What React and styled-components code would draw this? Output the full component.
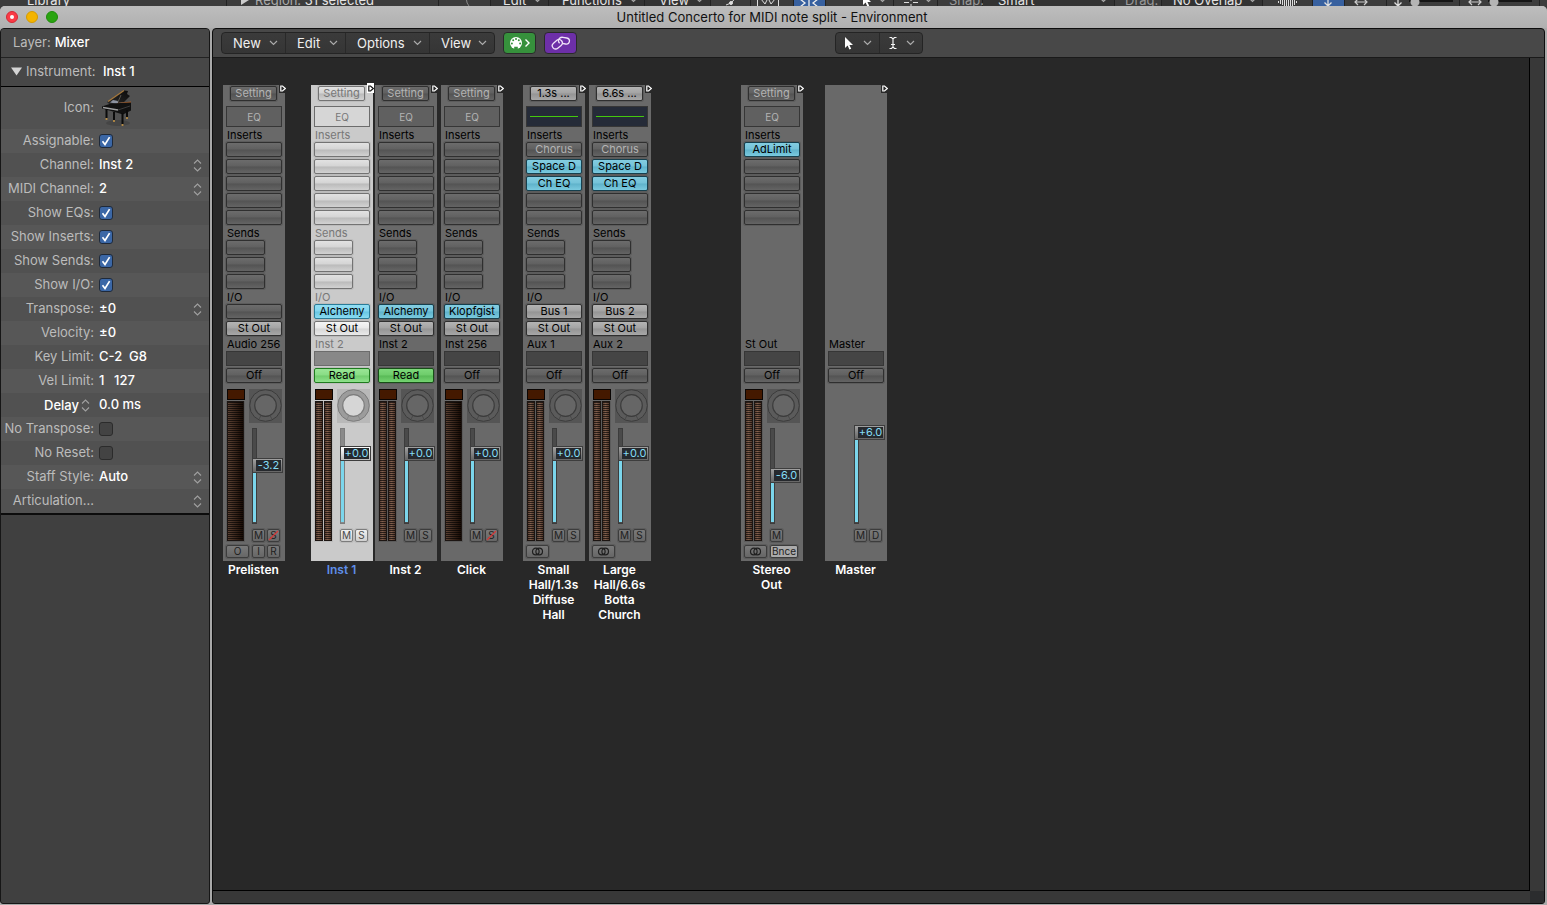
import React from "react";
import styled, { createGlobalStyle, css } from "styled-components";

const Global = createGlobalStyle`
  * { box-sizing: border-box; }
  html, body, #root { height: 100%; }
  body {
    margin: 0;
    overflow: hidden;
    background: #3a3a3a;
    color: #fff;
    font-family: Inter, "Liberation Sans", sans-serif;
    font-size: 13px;
  }
  button, input, select { font: inherit; color: inherit; margin: 0; padding: 0; }
`;

const Desktop = styled.div`
  display: flex;
  flex-direction: column;
  height: 100vh;
`;

/* ---------- toolbar of the window behind ---------- */

const BackStrip = styled.div`
  height: 6px;
  flex: none;
  overflow: hidden;
  background: #3c3c3c;
`;
const BackRow = styled.div`
  display: flex;
  height: 16px;
  margin-top: -8px;
  line-height: 16px;
  white-space: nowrap;
  color: #e4e4e4;
`;
const BackCell = styled.div`
  display: flex;
  align-items: center;
  flex: 0 1 ${(p) => p.$w}px;
  min-width: 0;
  gap: 6px;
  padding-left: ${(p) => p.$pad || 0}px;
  background: ${(p) => (p.$on ? "#37609f" : p.$dark ? "#333" : "transparent")};
  border-right: 1px solid #222;
  color: ${(p) => (p.$dim ? "#999" : "inherit")};
  justify-content: ${(p) => (p.$split ? "space-between" : "flex-start")};
  padding-right: ${(p) => (p.$split ? 6 : 0)}px;
  svg { flex: none; }
`;
const BackMuted = styled.span`
  color: #aaa;
`;

/* ---------- window ---------- */

const Window = styled.div`
  flex: 1;
  min-height: 0;
  display: flex;
  flex-direction: column;
  background: #a9a9a9;
  border-radius: 5px 5px 0 0;
`;
const TitleBar = styled.header`
  display: grid;
  grid-template-columns: 1fr auto 1fr;
  align-items: center;
  height: 22px;
  flex: none;
  padding: 0 9px 0 6px;
  background: linear-gradient(#bdbdbd, #b0b0b0);
  border-radius: 5px 5px 0 0;
`;
const Lights = styled.div`
  display: flex;
  gap: 8px;
`;
const Light = styled.button`
  display: grid;
  place-items: center;
  width: 12px;
  height: 12px;
  border: 1px solid ${(p) => p.$edge};
  border-radius: 50%;
  background: ${(p) => p.$color};
  &::after {
    content: "";
    width: 4px;
    height: 4px;
    border-radius: 50%;
    background: ${(p) => (p.$dot ? "#fff" : "transparent")};
  }
`;
const Title = styled.h1`
  margin: 0;
  font-size: 13px;
  line-height: 16px;
  font-weight: 400;
  color: #111;
`;
const Body = styled.div`
  flex: 1;
  min-height: 0;
  display: flex;
  gap: 2px;
  padding: 0 2px 1px 0;
`;

/* ---------- inspector ---------- */

const Sidebar = styled.aside`
  width: 210px;
  flex: none;
  background: #404040;
  border: 1px solid #161616;
  border-radius: 4px 4px 3px 3px;
  overflow: hidden;
`;
const SideHead = styled.div`
  display: flex;
  align-items: center;
  gap: ${(p) => p.$gap}px;
  height: 29px;
  padding: 0 0 2px ${(p) => p.$pad}px;
  background: #474747;
  border-bottom: 1px solid ${(p) => (p.$strong ? "#000" : "#222")};
`;
const Muted = styled.span`
  color: #bcbcbc;
`;
const Strong = styled.span`
  font-weight: 500;
`;
const Rows = styled.div`
  border-bottom: 2px solid #0c0c0c;
`;
const Row = styled.div`
  display: grid;
  grid-template-columns: 93px 1fr;
  column-gap: 5px;
  align-items: center;
  height: ${(p) => (p.$tall ? 42 : 24)}px;
  padding-right: 7px;
  background: #515151;
  &:nth-child(even) { background: #575757; }
`;
const RowLabel = styled.label`
  justify-self: end;
  padding-bottom: 2px;
  line-height: 16px;
  white-space: nowrap;
  color: #bcbcbc;
`;
const ValueCell = styled.div`
  display: flex;
  align-items: center;
  gap: 6px;
  min-width: 0;
`;
const Field = styled.input`
  width: ${(p) => p.$w || 90}px;
  height: 18px;
  min-width: 0;
  padding-bottom: 2px;
  border: 0;
  background: none;
  font-weight: 500;
  line-height: 16px;
  outline: none;
`;
const Select = styled.select`
  appearance: none;
  flex: 1;
  height: 18px;
  min-width: 0;
  padding-bottom: 2px;
  border: 0;
  background: none;
  font-weight: 500;
  line-height: 16px;
  outline: none;
`;
const DelayLabel = styled.label`
  display: flex;
  align-items: center;
  justify-self: end;
  gap: 2px;
  padding-right: 4px;
  font-weight: 500;
`;
const Tick = styled.span`
  display: grid;
  place-items: center;
  > * { grid-area: 1 / 1; }
  svg { pointer-events: none; }
`;
const TickInput = styled.input`
  appearance: none;
  width: 14px;
  height: 14px;
  border: 1px solid #2b2b2b;
  border-radius: 3px;
  background: #434343;
  &:checked { background: #3b67a6; border-color: #1f2a3a; }
`;

/* ---------- environment pane ---------- */

const Pane = styled.main`
  flex: 1;
  min-width: 0;
  display: flex;
  flex-direction: column;
  background: #484848;
  border: 1px solid #0d0d0d;
  border-radius: 4px 4px 3px 3px;
  overflow: hidden;
`;
const Toolbar = styled.div`
  display: grid;
  grid-template-columns: 1fr auto 1fr;
  align-items: center;
  height: 29px;
  flex: none;
  padding: 0 8px;
  border-bottom: 1px solid #1a1a1a;
`;
const ToolLeft = styled.div`
  display: flex;
  gap: 8px;
`;
const Group = styled.div`
  display: flex;
  height: 22px;
  border: 1px solid #242424;
  border-radius: 4px;
  background: linear-gradient(#3b3b3b, #353535);
  overflow: hidden;
`;
const MenuButton = styled.button`
  display: flex;
  align-items: center;
  justify-content: space-between;
  min-width: ${(p) => p.$w}px;
  padding: 0 7px 0 11px;
  border: 0;
  background: none;
  color: #f0f0f0;
  & + & { border-left: 1px solid #292929; }
`;
const ToolButton = styled(MenuButton)`
  padding: 0 7px 0 8px;
`;
const ColorButton = styled.button`
  display: flex;
  align-items: center;
  justify-content: center;
  width: 33px;
  height: 22px;
  border: 1px solid #2a2a2a;
  border-radius: 4px;
  background: ${(p) => p.$color};
`;
const CanvasArea = styled.div`
  flex: 1;
  min-height: 0;
  display: grid;
  grid-template-columns: 1fr 14px;
  grid-template-rows: 1fr 12px;
  background: #383838;
`;
const Canvas = styled.div`
  display: flex;
  align-items: flex-start;
  padding: 27px 0 0 10px;
  background: #282828;
  border-right: 1px solid #000;
  border-bottom: 1px solid #000;
  overflow: hidden;
`;
const Corner = styled.div`
  grid-area: 2 / 2;
  background: #2b2c2e;
`;

/* ---------- channel strips ---------- */

const normal = {
  strip: "#696969", text: "#000", faint: "#b4b4b4", edge: "#2f2f2f", halo: "#5c5c5c",
  slot: "linear-gradient(#6c6c6c, #606060 48%, #535353 52%, #646464)",
  lit: "linear-gradient(#b4b4b4, #a3a3a3 48%, #949494 52%, #a8a8a8)",
  blue: "linear-gradient(#83cde1, #74c2d8 48%, #5eb2ca 52%, #7acadf)",
  green: "linear-gradient(#7ed87b, #6dcc6a 48%, #58b956 52%, #74d471)",
  blueEdge: "#16404e", greenEdge: "#174f17",
  eq: "#606060", box: "#454545", boxEdge: "#363636",
  knobBack: "#555", ring: "#5b5b5b", knob: "#666", knobEdge: "#3c3c3c", track: "#4a4a4a",
  small: "linear-gradient(#7a7a7a, #666)", smallText: "#1e1e1e",
  cap: "linear-gradient(#a0a0a0, #666)",
};
const selected = {
  ...normal,
  strip: "#cacaca", text: "#777", faint: "#777", edge: "#737373", halo: "#bcbcbc",
  slot: "linear-gradient(#e2e2e2, #d4d4d4 48%, #bababa 52%, #d2d2d2)",
  lit: "linear-gradient(#f5f5f5, #e8e8e8 48%, #d6d6d6 52%, #eaeaea)",
  blue: "linear-gradient(#93dff4, #82d5ef 48%, #68c5e2 52%, #8adcf3)",
  green: "linear-gradient(#9ae696, #88dc84 48%, #70cc6d 52%, #8fe28c)",
  blueEdge: "#2b7c98", greenEdge: "#1f7a1f",
  eq: "#d6d6d6", box: "#888", boxEdge: "#6c6c6c",
  knobBack: "#b8b8b8", ring: "#9c9c9c", knob: "#d6d6d6", knobEdge: "#7c7c7c", track: "#8a8a8a",
  small: "linear-gradient(#f0f0f0, #cfcfcf)", smallText: "#4a4a4a",
  cap: "linear-gradient(#fff, #bbb)",
};

const StripColumn = styled.section`
  width: 62px;
  flex: none;
  margin-left: ${(p) => p.$gap}px;
`;
const StripBox = styled.div`
  position: relative;
  display: flex;
  flex-direction: column;
  min-height: 476px;
  padding: 1px 3px 3px;
  background: ${(p) => p.$t.strip};
`;
const Flag = styled.div`
  position: absolute;
  top: -2px;
  right: -1px;
  display: flex;
  align-items: center;
  justify-content: center;
  width: 7px;
  height: 10px;
  background: ${(p) => (p.$on ? "#fff" : "#282828")};
  svg { display: block; flex: none; }
`;
const Slot = styled.button`
  display: block;
  width: ${(p) => p.$w || 56}px;
  height: 15px;
  border: 1px solid ${(p) => p.$t.edge};
  border-radius: 2px;
  box-shadow: 0 0 0 1px ${(p) => p.$t.halo};
  background: ${(p) => p.$t.slot};
  color: ${(p) => (p.$kind === "faint" ? p.$t.faint : "#000")};
  font-size: 11px;
  line-height: 13px;
  text-align: center;
  white-space: nowrap;
  ${(p) => p.$kind === "lit" && css`background: ${p.$t.lit};`}
  ${(p) => p.$kind === "blue" && css`background: ${p.$t.blue}; border-color: ${p.$t.blueEdge};`}
  ${(p) => p.$kind === "green" && css`background: ${p.$t.green}; border-color: ${p.$t.greenEdge};`}
`;
const SettingSlot = styled(Slot)`
  margin-left: 4px;
  margin-bottom: 5px;
`;
const EqButton = styled.button`
  display: grid;
  place-items: center;
  width: 56px;
  height: 21px;
  border: 1px solid ${(p) => p.$t.boxEdge};
  background: ${(p) => (p.$curve ? "#252b38" : p.$t.eq)};
  color: ${(p) => p.$t.faint};
  font-size: 10px;
  line-height: 12px;
`;
const EqLine = styled.span`
  width: 48px;
  height: 1px;
  background: #44c80e;
`;
const SlotLabel = styled.div`
  height: 15px;
  padding-left: 1px;
  font-size: 11px;
  line-height: 17px;
  white-space: nowrap;
  color: ${(p) => p.$t.text};
`;
const Stack = styled.div`
  display: flex;
  flex-direction: column;
  gap: 2px;
`;
const LowerPart = styled.div`
  margin-top: auto;
`;
const GroupBox = styled.div`
  height: 15px;
  border: 1px solid ${(p) => p.$t.boxEdge};
  background: ${(p) => p.$t.box};
`;
const Levels = styled.div`
  display: flex;
  gap: 4px;
  height: 153px;
  margin-top: 6px;
`;
const MeterColumn = styled.div`
  display: flex;
  flex-direction: column;
  width: 19px;
`;
const Clip = styled.div`
  height: 11px;
  border: 1px solid #0a0503;
  background: #441900;
  margin: 0 0 1px 1px;
`;
const Meters = styled.div`
  display: flex;
  gap: 1px;
  flex: 1;
  padding: 0 1px 1px;
  background: ${(p) => p.$t.halo};
`;
const Meter = styled.div`
  flex: 1;
  border: 1px solid #1c1512;
  background:
    repeating-linear-gradient(rgba(0, 0, 0, 0.65) 0 1px, transparent 1px 2px),
    ${(p) =>
      p.$mono
        ? "linear-gradient(90deg, #5c4234, #1c0d05)"
        : "linear-gradient(90deg, #5e4234, #82604e 40%, #563a2c)"};
`;
const ControlColumn = styled.div`
  display: flex;
  flex-direction: column;
  width: 33px;
`;
const KnobButton = styled.button`
  display: block;
  width: 33px;
  height: 34px;
  border: 0;
  background: ${(p) => p.$t.knobBack};
  svg { display: block; }
`;
const KnobSpace = styled.div`
  height: 34px;
`;
const Fader = styled.div`
  position: relative;
  width: 32px;
  height: 100px;
  padding-top: 3px;
  margin: 2px 0 4px 3px;
`;
const Groove = styled.div`
  display: flex;
  align-items: flex-end;
  width: 5px;
  height: 96px;
  padding-bottom: 1px;
  border: 1px solid ${(p) => p.$t.knobEdge};
  background: ${(p) => p.$t.track};
`;
const Fill = styled.div`
  width: 3px;
  background: #7bd6ec;
`;
const Cap = styled.output`
  position: absolute;
  left: 0;
  width: 31px;
  height: 15px;
  padding-left: 3px;
  border: 1px solid #3d3d3d;
  background: ${(p) => p.$t.cap};
  pointer-events: none;
`;
const CapText = styled.span`
  display: block;
  height: 11px;
  margin: 1px 1px 0 0;
  background: #26292d;
  color: #84dcf4;
  font-size: 11px;
  line-height: 11px;
  text-align: center;
  white-space: nowrap;
`;
const Range = styled.input`
  position: absolute;
  inset: 0;
  width: 100%;
  height: 100%;
  writing-mode: vertical-lr;
  direction: rtl;
  opacity: 0;
`;
const Pair = styled.div`
  display: flex;
  gap: 2px;
  margin-left: 3px;
`;
const Small = styled.button`
  display: grid;
  place-items: center;
  width: ${(p) => p.$w || 13}px;
  height: 13px;
  border: 1px solid ${(p) => p.$t.knobEdge};
  border-radius: 2px;
  box-shadow: 0 0 0 1px ${(p) => p.$t.halo};
  background: ${(p) => (p.$lit ? "#aaa" : p.$t.small)};
  color: ${(p) => p.$t.smallText};
  font-size: 10px;
  line-height: 11px;
  > * { grid-area: 1 / 1; }
`;
const Foot = styled.div`
  display: flex;
  align-items: center;
  gap: 3px;
  height: 13px;
  margin-top: 3px;
`;
const FootPair = styled.div`
  display: flex;
  gap: 2px;
`;
const StripName = styled.h2`
  margin: 1px 0 0 -1px;
  font-size: 12px;
  line-height: 15px;
  font-weight: 600;
  text-align: center;
  white-space: pre-line;
  color: ${(p) => (p.$on ? "#5f8fea" : "#fff")};
`;

/* ---------- icons ---------- */

const Chevron = () => (
  <svg width="9" height="6" viewBox="0 0 9 6" fill="none" stroke="#aaa" strokeWidth="1.2">
    <path d="M1 1l3.5 3.5L8 1" />
  </svg>
);
const UpDown = () => (
  <svg width="9" height="13" viewBox="0 0 9 13" fill="none" stroke="#a0a0a0" strokeWidth="1.1">
    <path d="M1 4.5L4.5 1 8 4.5M1 8.5L4.5 12 8 8.5" />
  </svg>
);
const Arrow = () => (
  <svg width="10" height="14" viewBox="0 0 10 14">
    <path d="M1 1v11l2.6-2.4 1.8 4 1.8-.8-1.8-3.9H9z" fill="#fff" />
  </svg>
);
const Caret = () => (
  <svg width="10" height="14" viewBox="0 0 10 14" fill="none" stroke="#f4f4f4" strokeWidth="1.2">
    <path d="M1.5 1.5h2L5 3l1.5-1.5h2M5 3v8M1.5 12.5h2L5 11l1.5 1.5h2M3 8.5h4" />
  </svg>
);
const MidiIcon = () => (
  <svg width="22" height="14" viewBox="0 0 22 14">
    <circle cx="7" cy="7" r="6" fill="#fff" />
    <g fill="#36913c">
      <circle cx="2.9" cy="7.5" r="1" />
      <circle cx="4.2" cy="4.3" r="1" />
      <circle cx="7" cy="3" r="1" />
      <circle cx="9.8" cy="4.3" r="1" />
      <circle cx="11.1" cy="7.5" r="1" />
      <path d="M5.2 10.8h3.6V13H5.2z" />
    </g>
    <path d="M16.5 3.5L20 7l-3.5 3.5" fill="none" stroke="#fff" strokeWidth="1.4" />
  </svg>
);
const LinkIcon = () => (
  <svg width="20" height="16" viewBox="0 0 20 16" fill="none" stroke="#efe2f8" strokeWidth="1.3">
    <rect x="0.8" y="6" width="11" height="6.6" rx="3.3" transform="rotate(-40 6.3 9.3)" />
    <path d="M8.600 8.200c-1.300-1.300-1.300-3.500 0-4.900 1-1 2.100-1.200 3.300-1l3.900.7c1.800.4 2.900 1.900 2.600 3.600-.4 1.700-1.900 2.700-3.700 2.400l-3.600-.7" />
  </svg>
);
const CheckMark = () => (
  <svg width="14" height="14" viewBox="0 0 14 14" fill="none" stroke="#fff" strokeWidth="1.7">
    <path d="M3.500 7.200l2.500 3.300 4.600-7.400" />
  </svg>
);
const Piano = () => (
  <svg width="34" height="38" viewBox="0 0 34 38">
    <defs>
      <linearGradient id="lid" x1="0" y1="1" x2="1" y2="0">
        <stop offset="0" stopColor="#2b2b2b" />
        <stop offset="1" stopColor="#0a0a0a" />
      </linearGradient>
    </defs>
    <ellipse cx="19" cy="34" rx="12" ry="3" fill="#454545" />
    <path d="M8 13L25 1.500l4 .5-1 3 3 2-6 6L10 15z" fill="url(#lid)" />
    <path d="M9 12.500L25 1.500" stroke="#a8793c" strokeWidth="1.200" />
    <path d="M11 13.500l3-2.500 5 1v3z" fill="#8d93a0" />
    <path d="M19 13l3-7" stroke="#59544d" strokeWidth="1" />
    <path d="M18 14l14-1.500v2L18 16.500z" fill="#a55f2c" />
    <path d="M3 17.500l9-3 20-1v8l-8 4-10-3-11-3z" fill="#111" />
    <path d="M4 18.500l15 2.500" stroke="#9c9c9c" strokeWidth="1.300" />
    <path d="M19 21l12-4" stroke="#3a3a3a" strokeWidth="1" />
    <path d="M7.500 20v9M15 23v8M23.500 24v11M28 21v8" stroke="#0b0b0b" strokeWidth="2" />
    <path d="M7.500 29v2M15 31v2M23.500 35v2M28 28v2" stroke="#b58b45" strokeWidth="1.800" />
  </svg>
);
const Rings = () => (
  <svg width="13" height="9" viewBox="0 0 13 9" fill="none" stroke="#1f1f1f" strokeWidth="1.200">
    <circle cx="4.800" cy="4.500" r="3.300" />
    <circle cx="8.200" cy="4.500" r="3.300" />
  </svg>
);
const Triangle = ({ color }) => (
  <svg width="6" height="7" viewBox="0 0 6 7" fill="none" stroke={color} strokeWidth="1.200">
    <path d="M.8 1v5h1.700L5.300 3.500 2.500 1z" />
  </svg>
);
const Slash = () => (
  <svg width="11" height="11" viewBox="0 0 11 11" stroke="#d43838" strokeWidth="1.200">
    <path d="M1 10L10 1" />
  </svg>
);
const Knob = ({ t }) => (
  <svg width="33" height="34" viewBox="0 0 33 34">
    <circle cx="16.500" cy="16.500" r="15.800" fill={t.ring} stroke={t.knobEdge} />
    <path d="M9.500 31l2.500-4.500q4.500 2 9 0l2.500 4.500" fill="none" stroke={t.knobEdge} opacity=".6" />
    <circle cx="16.500" cy="16.500" r="10.800" fill={t.knob} stroke={t.knobEdge} strokeWidth="1.200" />
  </svg>
);

/* ---------- data ---------- */

const channels = [
  { name: "Prelisten", gap: 0, setting: "Setting", id: "Audio 256", io: [null, "St Out"], auto: "Off", mono: true, db: "-3.2", top: 33, ms: "MS", noSolo: true, foot: "rec" },
  { name: "Inst 1", gap: 26, on: true, setting: "Setting", id: "Inst 2", io: ["Alchemy", "St Out"], auto: "Read", db: "+0.0", top: 21, ms: "MS" },
  { name: "Inst 2", gap: 2, setting: "Setting", id: "Inst 2", io: ["Alchemy", "St Out"], auto: "Read", db: "+0.0", top: 21, ms: "MS" },
  { name: "Click", gap: 4, setting: "Setting", id: "Inst 256", io: ["Klopfgist", "St Out"], auto: "Off", mono: true, db: "+0.0", top: 21, ms: "MS", noSolo: true },
  { name: "Small\nHall/1.3s\nDiffuse\nHall", gap: 20, setting: "1.3s ...", curve: true, fx: ["Chorus", "Space D", "Ch EQ"], id: "Aux 1", io: ["Bus 1", "St Out"], auto: "Off", db: "+0.0", top: 21, ms: "MS", foot: "stereo" },
  { name: "Large\nHall/6.6s\nBotta\nChurch", gap: 4, setting: "6.6s ...", curve: true, fx: ["Chorus", "Space D", "Ch EQ"], id: "Aux 2", io: ["Bus 2", "St Out"], auto: "Off", db: "+0.0", top: 21, ms: "MS", foot: "stereo" },
  { name: "Stereo\nOut", gap: 90, setting: "Setting", fx: ["AdLimit"], id: "St Out", auto: "Off", db: "-6.0", top: 43, ms: "M", foot: "bounce" },
  { name: "Master", gap: 22, id: "Master", auto: "Off", bare: true, db: "+6.0", top: 0, ms: "MD" },
];

const FILL_RANGE = 90;

const slotKind = (text) => {
  if (!text) return "empty";
  if (text === "Chorus") return "faint";
  return /^(Bus|St)/.test(text) ? "lit" : "blue";
};

function Strip({ c }) {
  const t = c.on ? selected : normal;
  const inserts = [0, 1, 2, 3, 4].map((i) => (c.fx || [])[i]);
  return (
    <StripColumn $gap={c.gap}>
      <StripBox $t={t}>
        <Flag $on={c.on}><Triangle color={c.on ? "#111" : "#fff"} /></Flag>
        {c.setting && (
          <>
            <SettingSlot $t={t} $w={47} $kind={c.curve ? "lit" : "faint"}>{c.setting}</SettingSlot>
            <EqButton $t={t} $curve={c.curve} aria-label="EQ">{c.curve ? <EqLine /> : "EQ"}</EqButton>
            <SlotLabel $t={t}>Inserts</SlotLabel>
            <Stack>
              {inserts.map((text, i) => (
                <Slot key={i} $t={t} $kind={slotKind(text)} aria-label={text || "Empty insert"}>{text}</Slot>
              ))}
            </Stack>
          </>
        )}
        {c.io && (
          <>
            <SlotLabel $t={t}>Sends</SlotLabel>
            <Stack>
              {[0, 1, 2].map((i) => <Slot key={i} $t={t} $w={39} aria-label="Empty send" />)}
            </Stack>
            <SlotLabel $t={t}>I/O</SlotLabel>
            <Stack>
              {c.io.map((text, i) => (
                <Slot key={i} $t={t} $kind={slotKind(text)} aria-label={text || "Empty input"}>{text}</Slot>
              ))}
            </Stack>
          </>
        )}
        <LowerPart>
          <SlotLabel $t={t}>{c.id}</SlotLabel>
          <Stack>
            <GroupBox $t={t} />
            <Slot $t={t} $kind={c.auto === "Read" ? "green" : "plain"}>{c.auto}</Slot>
          </Stack>
          <Levels>
            <MeterColumn>
              {!c.bare && (
                <>
                  <Clip />
                  <Meters $t={t}>
                    <Meter $mono={c.mono} />
                    {!c.mono && <Meter />}
                  </Meters>
                </>
              )}
            </MeterColumn>
            <ControlColumn>
              {c.bare ? <KnobSpace /> : <KnobButton $t={t} aria-label="Pan"><Knob t={t} /></KnobButton>}
              <Fader>
                <Groove $t={t}><Fill style={{ height: FILL_RANGE - c.top }} /></Groove>
                <Range type="range" min="0" max="85" defaultValue={85 - c.top} aria-label={`${c.name} volume`} />
                <Cap $t={t} style={{ top: c.top }}><CapText>{c.db}</CapText></Cap>
              </Fader>
              <Pair>
                {c.ms.split("").map((m) => (
                  <Small key={m} $t={t}>
                    <span>{m}</span>
                    {m === "S" && c.noSolo && <Slash />}
                  </Small>
                ))}
              </Pair>
            </ControlColumn>
          </Levels>
          <Foot>
            {c.foot && <Small $t={t} $w={23} aria-label="Format">{c.foot === "rec" ? "O" : <Rings />}</Small>}
            {c.foot === "rec" && (
              <FootPair>
                <Small $t={t}>I</Small>
                <Small $t={t}>R</Small>
              </FootPair>
            )}
            {c.foot === "bounce" && <Small $t={t} $w={28} $lit>Bnce</Small>}
          </Foot>
        </LowerPart>
      </StripBox>
      <StripName $on={c.on}>{c.name}</StripName>
    </StripColumn>
  );
}

const Check = ({ id, on }) => (
  <Tick>
    <TickInput id={id} type="checkbox" defaultChecked={on} />
    {on && <CheckMark />}
  </Tick>
);
const CheckRow = ({ id, label, on }) => (
  <Row>
    <RowLabel htmlFor={id}>{label}</RowLabel>
    <ValueCell><Check id={id} on={on} /></ValueCell>
  </Row>
);
const SelectRow = ({ id, label, value }) => (
  <Row>
    <RowLabel htmlFor={id}>{label}</RowLabel>
    <ValueCell>
      <Select id={id} defaultValue={value}><option>{value}</option></Select>
      <UpDown />
    </ValueCell>
  </Row>
);

function Inspector() {
  return (
    <Sidebar>
      <SideHead $pad={12} $gap={4}><Muted>Layer:</Muted><Strong>Mixer</Strong></SideHead>
      <SideHead $pad={10} $gap={4} $strong>
        <svg width="11" height="9" viewBox="0 0 11 9"><path d="M0 .500h11L5.500 8.500z" fill="#d4d4d4" /></svg>
        <Muted>Instrument:</Muted>
        <Strong>&nbsp;Inst 1</Strong>
      </SideHead>
      <Rows>
        <Row $tall>
          <RowLabel as="span">Icon:</RowLabel>
          <ValueCell><Piano /></ValueCell>
        </Row>
        <CheckRow id="assignable" label="Assignable:" on />
        <SelectRow id="channel" label="Channel:" value="Inst 2" />
        <SelectRow id="midi" label="MIDI Channel:" value="2" />
        <CheckRow id="eqs" label="Show EQs:" on />
        <CheckRow id="inserts" label="Show Inserts:" on />
        <CheckRow id="sends" label="Show Sends:" on />
        <CheckRow id="io" label="Show I/O:" on />
        <SelectRow id="transpose" label="Transpose:" value="±0" />
        <Row>
          <RowLabel htmlFor="velocity">Velocity:</RowLabel>
          <ValueCell><Field id="velocity" defaultValue="±0" /></ValueCell>
        </Row>
        <Row>
          <RowLabel htmlFor="keylow">Key Limit:</RowLabel>
          <ValueCell>
            <Field id="keylow" $w={24} defaultValue="C-2" />
            <Field $w={24} defaultValue="G8" aria-label="Key limit high" />
          </ValueCell>
        </Row>
        <Row>
          <RowLabel htmlFor="vellow">Vel Limit:</RowLabel>
          <ValueCell>
            <Field id="vellow" $w={9} defaultValue="1" />
            <Field $w={30} defaultValue="127" aria-label="Velocity limit high" />
          </ValueCell>
        </Row>
        <Row>
          <DelayLabel htmlFor="delay">Delay<UpDown /></DelayLabel>
          <ValueCell><Field id="delay" defaultValue="0.0 ms" /></ValueCell>
        </Row>
        <CheckRow id="notranspose" label="No Transpose:" />
        <CheckRow id="noreset" label="No Reset:" />
        <SelectRow id="staff" label="Staff Style:" value="Auto" />
        <SelectRow id="articulation" label="Articulation..." value="" />
      </Rows>
    </Sidebar>
  );
}

const Wave = () => (
  <svg width="22" height="14" viewBox="0 0 22 14" stroke="#ddd" strokeWidth="1">
    <path d="M1.500 8v2M3.500 7v4M5.500 6v6M7.500 4v10M9.500 3v11M11.500 3v11M13.500 4v10M15.500 5v8M17.500 6v6M19.500 8v2" />
  </svg>
);
const DownArrow = () => (
  <svg width="10" height="14" viewBox="0 0 10 14" fill="none" stroke="#ddd" strokeWidth="1.300">
    <path d="M5 0v13M1.500 9.500L5 13l3.500-3.500" />
  </svg>
);
const WideArrow = () => (
  <svg width="14" height="14" viewBox="0 0 14 14" fill="none" stroke="#ccc" strokeWidth="1.200">
    <path d="M1 9h12M4 6L1 9l3 3M10 6l3 3-3 3" />
  </svg>
);
const ThumbLine = () => (
  <svg width="50" height="14" viewBox="0 0 50 14">
    <path d="M0 8h44" stroke="#151515" strokeWidth="2" />
    <circle cx="6" cy="9" r="4.500" fill="#b4b4b4" />
  </svg>
);

const BackToolbar = () => (
  <BackStrip>
    <BackRow>
      <BackCell $w={227} $pad={27}>Library</BackCell>
      <BackCell $w={212} $pad={14}>
        <svg width="8" height="12" viewBox="0 0 8 12"><path d="M0 1l8 5-8 5z" fill="#ccc" /></svg>
        <span><BackMuted>Region: </BackMuted>31 selected</span>
      </BackCell>
      <BackCell $w={52} $pad={24}>
        <svg width="8" height="14" viewBox="0 0 8 14"><path d="M6 1Q1 7 6 13" fill="none" stroke="#888" /></svg>
      </BackCell>
      <BackCell $w={58} $pad={12} $split $dark>Edit<Chevron /></BackCell>
      <BackCell $w={96} $pad={13} $split $dark>Functions<Chevron /></BackCell>
      <BackCell $w={66} $pad={14} $split $dark>View<Chevron /></BackCell>
      <BackCell $w={40} $pad={14}>
        <svg width="15" height="14" viewBox="0 0 15 14" fill="none" stroke="#ddd"><path d="M1 12l5-2M7 9l7-8" /><circle cx="6" cy="10" r="1.500" fill="#ddd" /></svg>
      </BackCell>
      <BackCell $w={43} $pad={6}>
        <svg width="22" height="14" viewBox="0 0 22 14" fill="none" stroke="#ddd"><path d="M.500 0v13.500h21V0M4 6l4 5 3-6 3 6 4-5" /></svg>
      </BackCell>
      <BackCell $w={32} $pad={5} $on>
        <svg width="20" height="14" viewBox="0 0 20 14" fill="none" stroke="#eee" strokeWidth="1.300"><path d="M1 6l5 4-5 4M10 0v14M19 6l-5 4 5 4" /></svg>
      </BackCell>
      <BackCell $w={68} $pad={36} $split><Arrow /><Chevron /></BackCell>
      <BackCell $w={44} $pad={10} $split>
        <svg width="14" height="14" viewBox="0 0 14 14" stroke="#ddd"><path d="M0 9.500h5M9 9.500h5M7 4v4M7 11v3" /></svg>
        <Chevron />
      </BackCell>
      <BackCell $w={45} $pad={11} $dim>Snap:</BackCell>
      <BackCell $w={132} $pad={15} $split $dark>Smart<Chevron /></BackCell>
      <BackCell $w={47} $pad={10} $dim>Drag:</BackCell>
      <BackCell $w={101} $pad={11} $split $dark>No Overlap<Chevron /></BackCell>
      <BackCell $w={50} $pad={14}><Wave /></BackCell>
      <BackCell $w={32} $pad={10} $on><DownArrow /></BackCell>
      <BackCell $w={42} $pad={9}><WideArrow /></BackCell>
      <BackCell $w={73} $pad={6}><DownArrow /><ThumbLine /></BackCell>
      <BackCell $w={80} $pad={8}><WideArrow /><ThumbLine /></BackCell>
    </BackRow>
  </BackStrip>
);

const menus = [["New", 63], ["Edit", 60], ["Options", 84], ["View", 65]];

export default function App() {
  return (
    <Desktop>
      <Global />
      <BackToolbar />
      <Window>
        <TitleBar>
          <Lights>
            <Light $color="#fb3b46" $edge="#d42a35" $dot aria-label="Close" />
            <Light $color="#f4b400" $edge="#d59b00" aria-label="Minimise" />
            <Light $color="#2aa411" $edge="#1f8c0b" aria-label="Zoom" />
          </Lights>
          <Title>Untitled Concerto for MIDI note split - Environment</Title>
        </TitleBar>
        <Body>
          <Inspector />
          <Pane>
            <Toolbar>
              <ToolLeft>
                <Group>
                  {menus.map(([m, w]) => <MenuButton key={m} $w={w}>{m}<Chevron /></MenuButton>)}
                </Group>
                <ColorButton $color="#36913c" aria-label="MIDI out"><MidiIcon /></ColorButton>
                <ColorButton $color="#6d2fa8" aria-label="Link"><LinkIcon /></ColorButton>
              </ToolLeft>
              <Group>
                <ToolButton $w={43} aria-label="Pointer tool"><Arrow /><Chevron /></ToolButton>
                <ToolButton $w={43} aria-label="Text tool"><Caret /><Chevron /></ToolButton>
              </Group>
            </Toolbar>
            <CanvasArea>
              <Canvas>
                {channels.map((c, i) => <Strip key={i} c={c} />)}
              </Canvas>
              <Corner />
            </CanvasArea>
          </Pane>
        </Body>
      </Window>
    </Desktop>
  );
}
